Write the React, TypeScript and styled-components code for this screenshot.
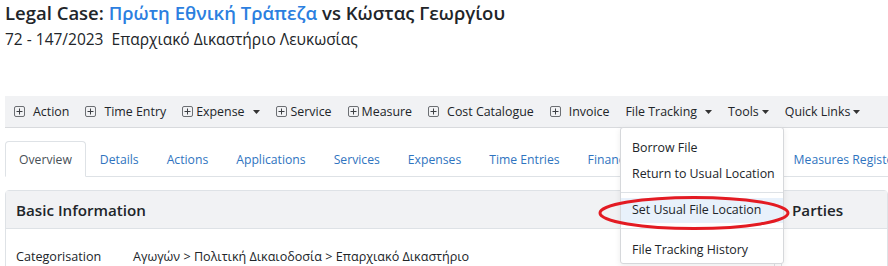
import styled, { createGlobalStyle } from "styled-components";

const GlobalStyle = createGlobalStyle`
  body {
    margin: 0;
    background: #fff;
    font-family: "Open Sans", "Noto Sans", sans-serif;
    color: #212529;
  }
`;

const PlusIcon = () => (
  <svg width="11" height="11" viewBox="0 0 11 11">
    <rect x="0.5" y="0.5" width="10" height="10" rx="1.5" fill="none" stroke="#6c6f73" />
    <path d="M5.5 2.5v6M2.5 5.5h6" stroke="#3c3f43" strokeWidth="1" />
  </svg>
);

const Caret = () => (
  <svg width="7" height="4" viewBox="0 0 7 4">
    <path d="M0 0h7L3.5 4z" fill="#333" />
  </svg>
);

const toolbarItems = [
  { label: "Action", icon: true, gap: 8 },
  { label: "Time Entry", icon: true, gap: 8 },
  { label: "Expense", icon: true, gap: 3, caret: 5 },
  { label: "Service", icon: true, gap: 4 },
  { label: "Measure", icon: true, gap: 3 },
  { label: "Cost Catalogue", icon: true, gap: 8 },
  { label: "Invoice", icon: true, gap: 8 },
  { label: "File Tracking", caret: 8 },
  { label: "Tools", caret: 3 },
  { label: "Quick Links", caret: 3 },
];

const tabs = [
  "Overview",
  "Details",
  "Actions",
  "Applications",
  "Services",
  "Expenses",
  "Time Entries",
  "Financials",
  "Correspondence",
  "Measures Register",
];

const App = () => {
  return (
    <>
      <GlobalStyle />
      <Pagina>
        <Titulo>
          Legal Case: <Azul>Πρώτη Εθνική Τράπεζα</Azul> vs Κώστας Γεωργίου
        </Titulo>
        <Subtitulo>72 - 147/2023&nbsp; Επαρχιακό Δικαστήριο Λευκωσίας</Subtitulo>

        <Toolbar>
          {toolbarItems.map((item) => (
            <ToolItem key={item.label} $gap={item.gap ?? 0}>
              {item.icon && <PlusIcon />}
              <span>{item.label}</span>
              {item.caret !== undefined && (
                <CaretBox $gap={item.caret}>
                  <Caret />
                </CaretBox>
              )}
            </ToolItem>
          ))}
        </Toolbar>

        <Tabs>
          {tabs.map((tab, i) => (
            <Tab key={tab} $active={i === 0}>
              {tab}
            </Tab>
          ))}
        </Tabs>

        <Cards>
          <Card>
            <CardHeader>Basic Information</CardHeader>
            <CardBody>
              <Fila>
                <Etiqueta>Categorisation</Etiqueta>
                <span>Αγωγών &gt; Πολιτική Δικαιοδοσία &gt; Επαρχιακό Δικαστήριο</span>
              </Fila>
            </CardBody>
          </Card>
          <Card>
            <CardHeader>Parties</CardHeader>
            <CardBody />
          </Card>
        </Cards>

        <Menu>
          <MenuItem>Borrow File</MenuItem>
          <MenuItem>Return to Usual Location</MenuItem>
          <Divisor />
          <MenuItem $activo>Set Usual File Location</MenuItem>
          <Divisor />
          <MenuItem $ultimo>File Tracking History</MenuItem>
        </Menu>

        <Marca width="200" height="40" viewBox="0 0 200 40">
          <ellipse cx="96" cy="17" rx="94" ry="15.5" fill="none" stroke="#e31b23" strokeWidth="3" />
        </Marca>
      </Pagina>
    </>
  );
};

export default App;

const Pagina = styled.div`
  position: relative;
  padding: 2px 0 0 5px;
  width: 888px;
  height: 266px;
  overflow: hidden;
  box-sizing: border-box;
`;

const Titulo = styled.div`
  font-size: 18.5px;
  font-weight: 600;
  line-height: 22px;
  color: #212529;
  white-space: nowrap;
`;

const Azul = styled.span`
  color: #2c7fe0;
`;

const Subtitulo = styled.div`
  margin-top: 4px;
  font-size: 15.5px;
  line-height: 22px;
  white-space: nowrap;
`;

const Toolbar = styled.div`
  display: flex;
  align-items: center;
  margin-top: 46px;
  height: 31px;
  padding-left: 9px;
  background: #f1f2f4;
  border-bottom: 1px solid #d8dadd;
  font-size: 12.4px;
`;

const ToolItem = styled.div<{ $gap: number }>`
  display: flex;
  align-items: center;
  gap: ${(p) => p.$gap}px;
  margin-right: 16px;
  white-space: nowrap;
  svg {
    flex: none;
  }
`;

const CaretBox = styled.span<{ $gap: number }>`
  display: flex;
  margin-left: ${(p) => p.$gap}px;
`;

const Tabs = styled.div`
  display: flex;
  margin-top: 13px;
  height: 35px;
  border-bottom: 1px solid #dee2e6;
  font-size: 12.2px;
`;

const Tab = styled.div<{ $active?: boolean }>`
  display: flex;
  align-items: center;
  padding: 0 13px;
  margin-bottom: -1px;
  white-space: nowrap;
  color: ${(p) => (p.$active ? "#495057" : "#2f74c0")};
  background: ${(p) => (p.$active ? "#fff" : "transparent")};
  border: 1px solid ${(p) => (p.$active ? "#dee2e6" : "transparent")};
  border-bottom-color: ${(p) => (p.$active ? "#fff" : "transparent")};
  border-radius: 4px 4px 0 0;
`;

const Cards = styled.div`
  display: grid;
  grid-template-columns: 770px 1fr;
  gap: 6px;
  margin-top: 13px;
`;

const Card = styled.div`
  border: 1px solid #dee2e6;
  border-radius: 4px;
  height: 120px;
`;

const CardHeader = styled.div`
  height: 37px;
  display: flex;
  align-items: center;
  padding-left: 10px;
  background: #f1f2f4;
  border-bottom: 1px solid #dee2e6;
  font-size: 15.2px;
  font-weight: 600;
  white-space: nowrap;
`;

const CardBody = styled.div`
  padding: 19px 10px;
  font-size: 12.6px;
`;

const Fila = styled.div`
  display: flex;
  white-space: nowrap;
`;

const Etiqueta = styled.span`
  width: 117px;
`;

const Menu = styled.div`
  position: absolute;
  left: 620px;
  top: 127px;
  width: 164px;
  padding: 7px 0 0;
  background: #fff;
  border: 1px solid #d6d8db;
  border-radius: 3px;
  box-shadow: 0 2px 6px rgba(0, 0, 0, 0.08);
  font-size: 12.4px;
  box-sizing: border-box;
`;

const MenuItem = styled.div<{ $activo?: boolean; $ultimo?: boolean }>`
  padding: ${(p) => (p.$activo ? "2px" : p.$ultimo ? "6px" : "3px")} 11px 3px;
  line-height: 20px;
  white-space: nowrap;
  background: ${(p) => (p.$activo ? "#e8f1fb" : "transparent")};
`;

const Divisor = styled.div`
  height: 1px;
  margin: 5px 0;
  background: #dee2e6;
`;

const Marca = styled.svg`
  position: absolute;
  left: 598px;
  top: 196px;
`;
